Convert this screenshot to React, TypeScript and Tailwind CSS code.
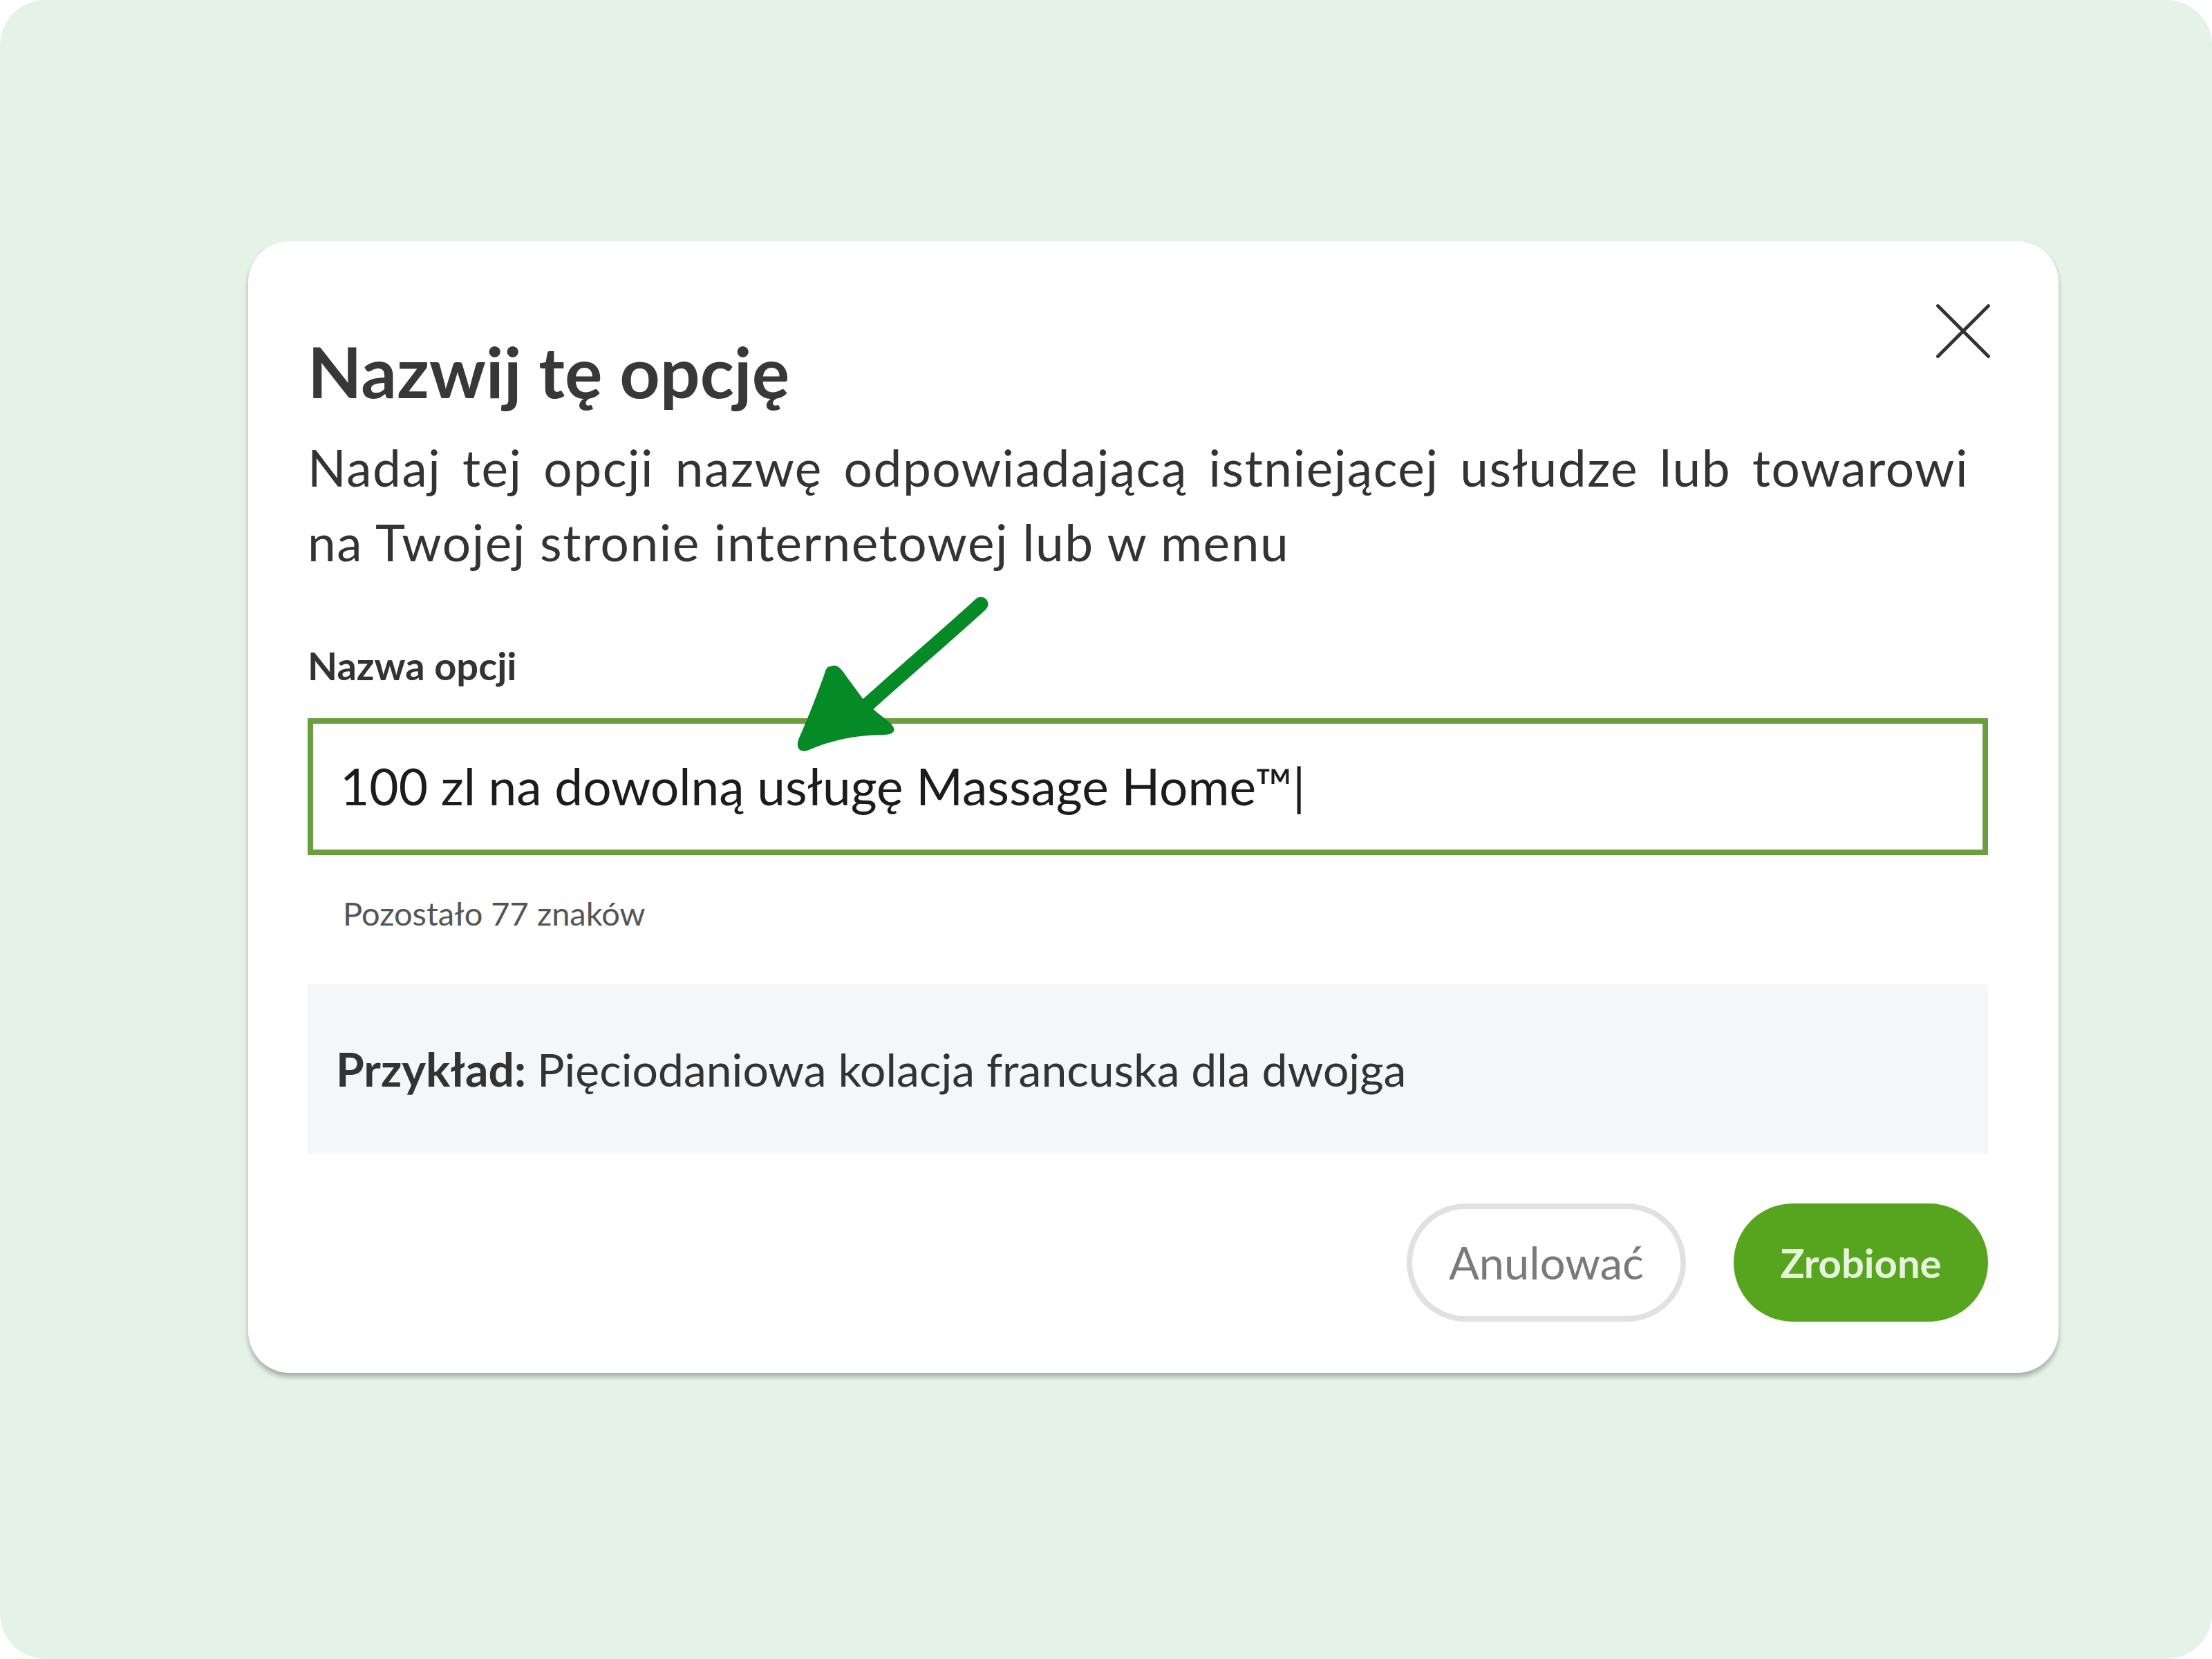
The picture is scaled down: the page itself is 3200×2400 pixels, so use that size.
import { X } from "lucide-react";

const font = { fontFamily: "Lato, 'Noto Sans', sans-serif" };

function Arrow() {
  return (
    <svg
      className="absolute left-[781px] top-[511px] pointer-events-none"
      width="300"
      height="240"
      viewBox="0 0 300 240"
    >
      <path
        d="M279 14 C 240 50, 170 110, 112 162"
        stroke="#058a26"
        strokeWidth="21"
        strokeLinecap="round"
        fill="none"
      />
      <path
        d="M62 104 C 70 100, 76 106, 84 118 L 112 156 L 128 170 L 148 186 C 158 196, 154 203, 138 203 C 100 203, 62 211, 30 225 C 17 230, 11 222, 15 210 C 30 176, 44 140, 53 114 C 55 106, 58 104, 62 104 Z"
        fill="#058a26"
      />
    </svg>
  );
}

export default function App() {
  return (
    <div className="w-[3200px] h-[2400px] bg-white" style={font}>
      <div className="h-full rounded-[66px] bg-[#e5f2e8] pt-[349px] pl-[359px]">
        <div className="relative w-[2619px] h-[1637px] bg-white rounded-[60px] shadow-[0_6px_7px_rgba(0,0,0,0.28)] pl-[86px] pr-[102px] pt-[137px] flex flex-col">
          {/* close */}
          <button className="absolute right-[65px] top-[57px] text-[#333]">
            <X size={146} strokeWidth={0.8} />
          </button>

          <h1 className="text-[102px] leading-[102px] font-bold text-[#383838]">
            Nazwij tę opcję
          </h1>

          <p className="mt-[34px] mr-[28px] text-[73px] leading-[108px] tracking-[0.021em] text-[#333] text-justify [text-align-last:left]">
            Nadaj tej opcji nazwę odpowiadającą istniejącej usłudze lub towarowi na Twojej stronie internetowej lub w menu
          </p>

          <label className="mt-[97px] text-[56px] leading-[56px] font-bold text-[#333]">
            Nazwa opcji
          </label>

          <div className="mt-[48px] h-[198px] border-[8px] border-[#6b9f3e] flex items-center pl-[39px] text-[73px] text-[#1c1c1c]">
            100 zl na dowolną usługę Massage Home™|
          </div>

          <div className="mt-[61px] pl-[51px] text-[47px] leading-[47px] text-[#555]">
            Pozostało 77 znaków
          </div>

          <div className="mt-[79px] h-[245px] bg-[#f5f6f8] flex items-center pl-[41px] text-[66px] text-[#333]">
            <span className="font-bold">Przykład:</span>
            <span className="ml-[16px]">Pięciodaniowa kolacja francuska dla dwojga</span>
          </div>

          <div className="mt-[72px] flex justify-end gap-[69px]">
            <button className="w-[404px] h-[171px] rounded-full border-[8px] border-[#dfe1e4] text-[65px] text-[#7a7a7a]">
              Anulować
            </button>
            <button className="w-[368px] h-[171px] rounded-full bg-[#57a51e] text-[58px] font-bold text-[#e6f4dc]">
              Zrobione
            </button>
          </div>

          <Arrow />
        </div>
      </div>
    </div>
  );
}
